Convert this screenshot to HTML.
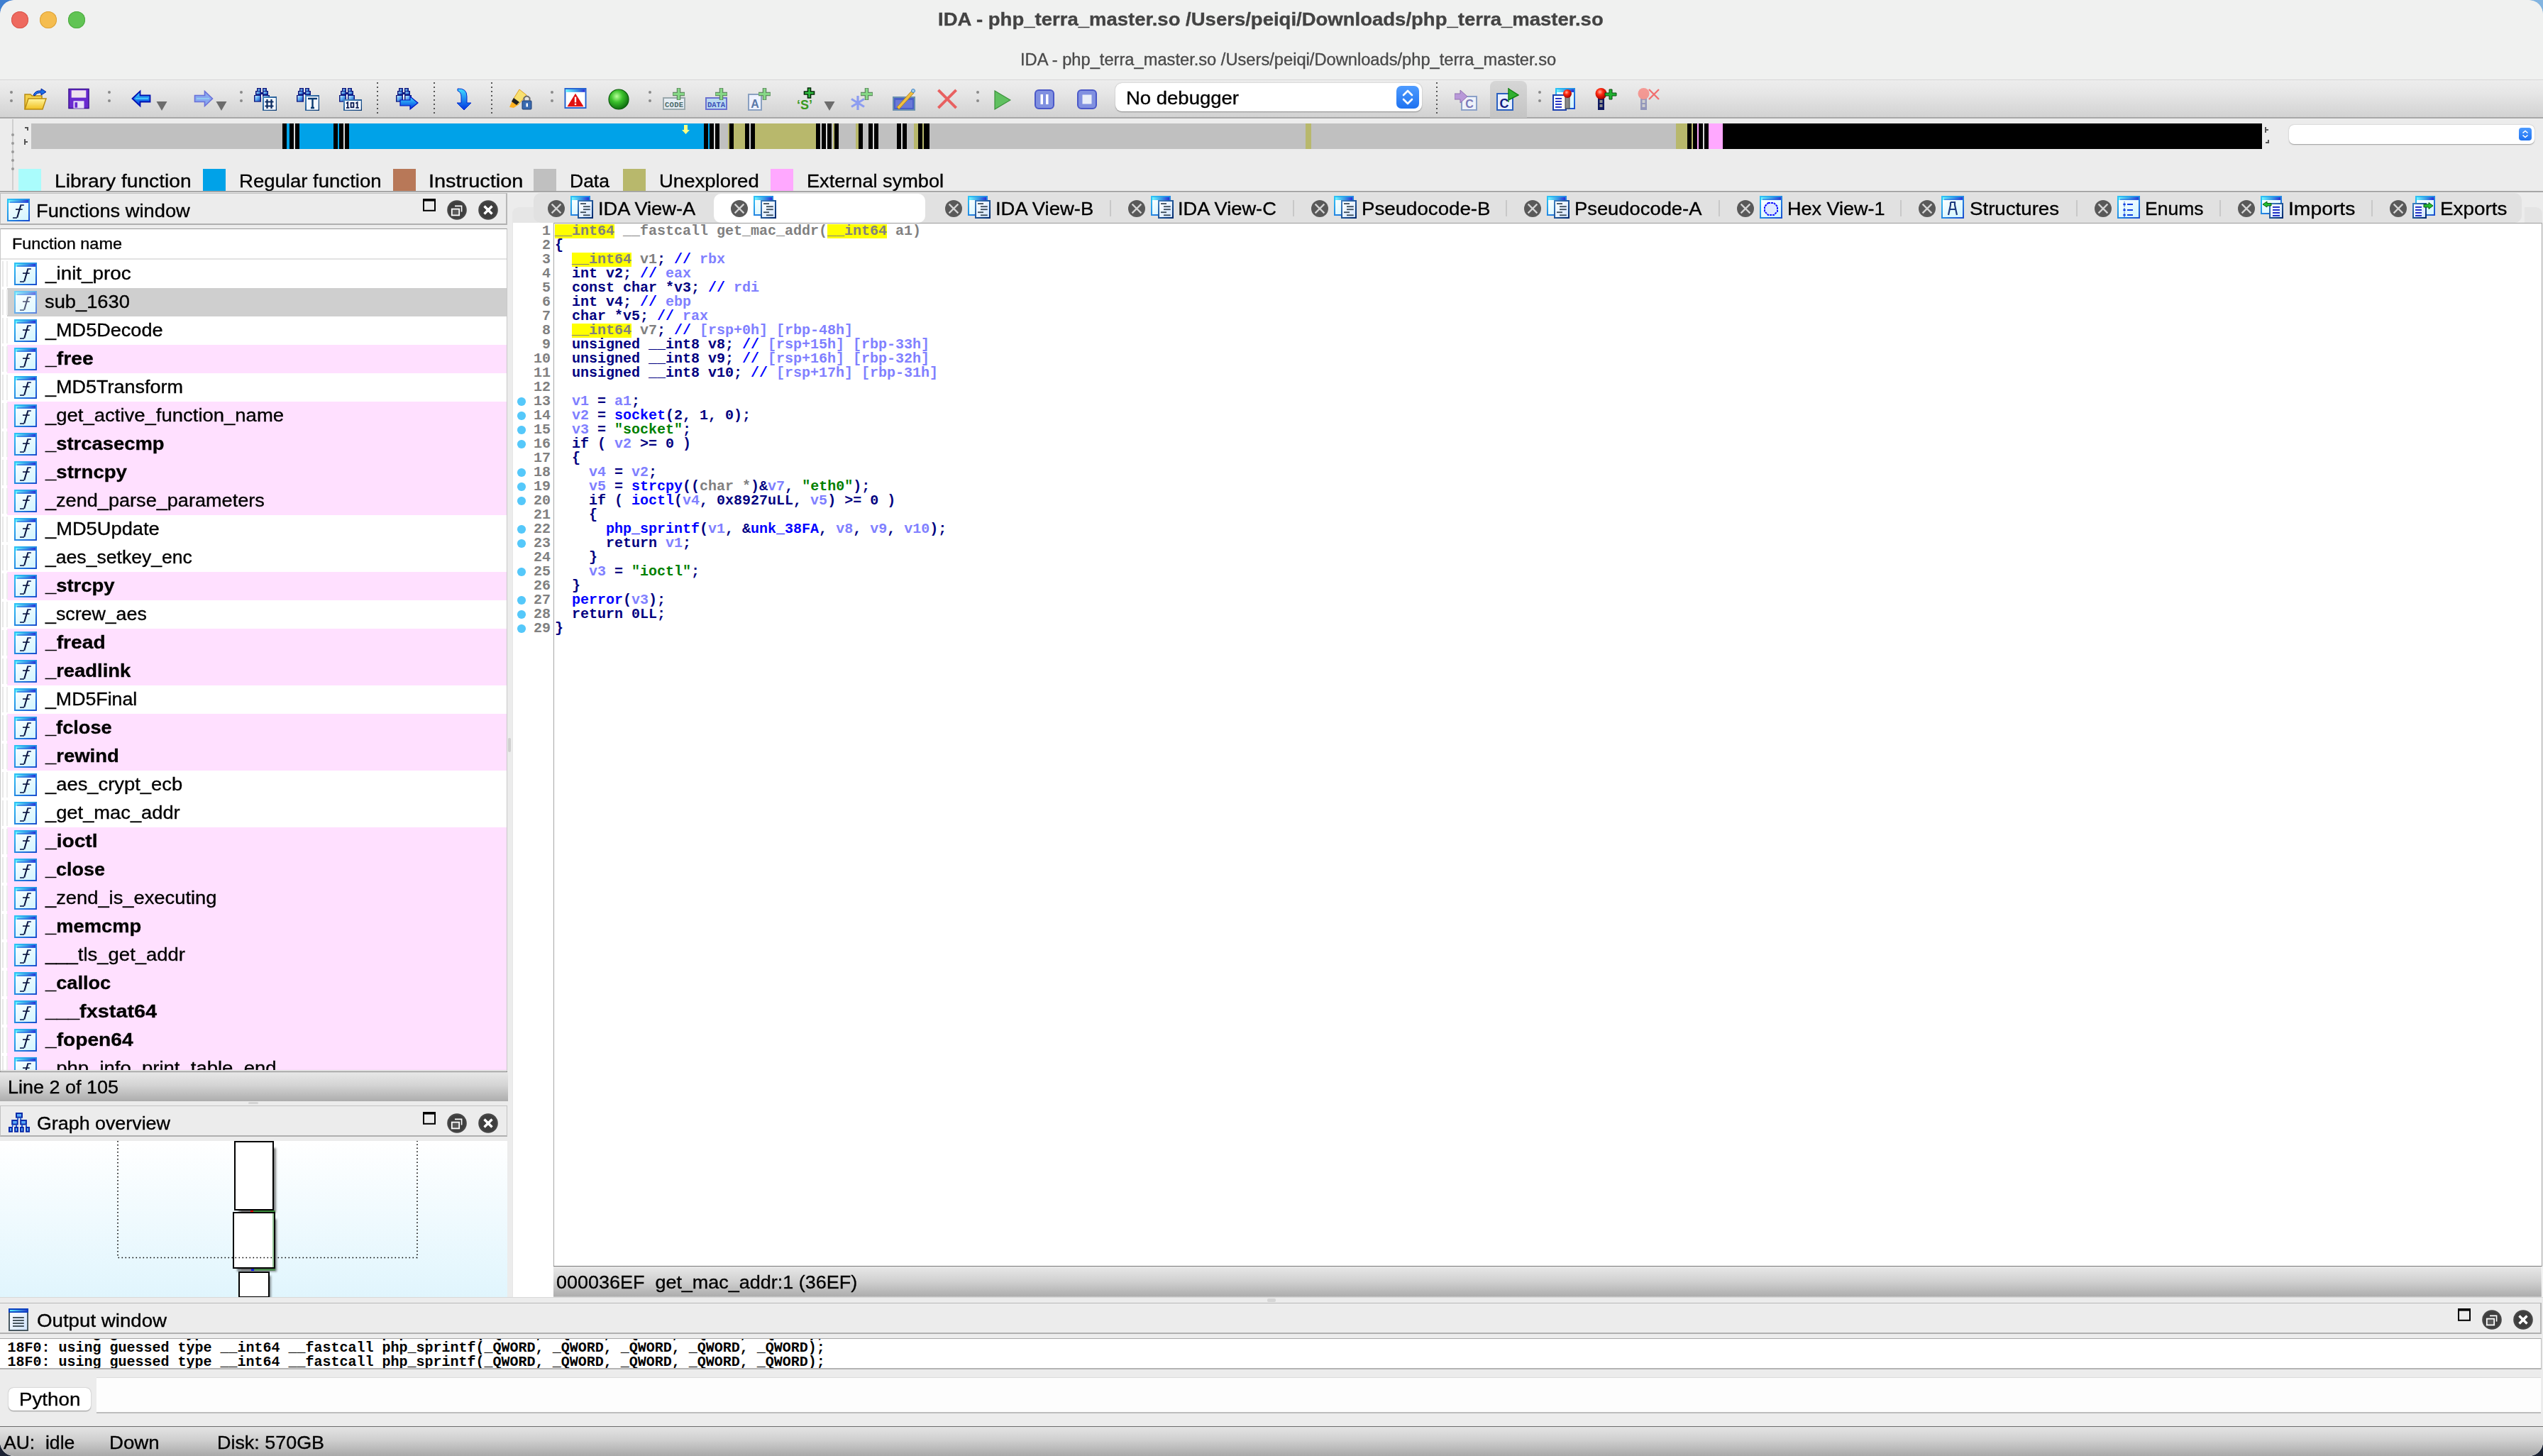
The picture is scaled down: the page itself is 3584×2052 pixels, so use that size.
<!DOCTYPE html>
<html><head><meta charset="utf-8"><style>
html,body{margin:0;padding:0;width:3584px;height:2052px;overflow:hidden;background:#2b3550}
#root div{position:absolute}
.t{position:absolute;line-height:40px;white-space:pre;-webkit-text-stroke:0.35px currentColor}
.c{position:absolute;font-family:'Liberation Mono';font-weight:bold;font-size:20px;line-height:20px;white-space:pre}
</style></head><body>

<svg width="0" height="0" style="position:absolute;left:0;top:0">
<defs>
 <linearGradient id="gWinBorder" x1="0" y1="0" x2="1" y2="1"><stop offset="0" stop-color="#2ec4f6"/><stop offset="1" stop-color="#1a4fcf"/></linearGradient>
 <linearGradient id="gTitle" x1="0" y1="0" x2="1" y2="0"><stop offset="0" stop-color="#6ef6ff"/><stop offset="0.55" stop-color="#3c9ae6"/><stop offset="1" stop-color="#2a2fd6"/></linearGradient>
 <linearGradient id="gWinBg" x1="0" y1="0" x2="0.6" y2="1"><stop offset="0" stop-color="#ffffff"/><stop offset="1" stop-color="#d6f6ff"/></linearGradient>
 <linearGradient id="gDocBorder" x1="0" y1="0" x2="1" y2="1"><stop offset="0" stop-color="#3f7fc0"/><stop offset="1" stop-color="#002a6e"/></linearGradient>
 <linearGradient id="gDocBg" x1="0" y1="0" x2="1" y2="1"><stop offset="0" stop-color="#ffffff"/><stop offset="1" stop-color="#d0e4ff"/></linearGradient>
 <radialGradient id="gGreenBall" cx="0.4" cy="0.35" r="0.65"><stop offset="0" stop-color="#b8ff9a"/><stop offset="0.45" stop-color="#3cc22c"/><stop offset="1" stop-color="#107010"/></radialGradient>
 <radialGradient id="gRedBall" cx="0.4" cy="0.35" r="0.65"><stop offset="0" stop-color="#ffb0a0"/><stop offset="0.4" stop-color="#ff2a10"/><stop offset="1" stop-color="#a00000"/></radialGradient>
 <linearGradient id="gBlueArrow" x1="0" y1="0" x2="0" y2="1"><stop offset="0" stop-color="#40e0ff"/><stop offset="1" stop-color="#0030e0"/></linearGradient>
 <linearGradient id="gFolder" x1="0" y1="0" x2="0" y2="1"><stop offset="0" stop-color="#fff6a0"/><stop offset="1" stop-color="#f0c020"/></linearGradient>

 <symbol id="win" viewBox="0 0 32 32">
  <rect x="1" y="1" width="30" height="30" fill="url(#gWinBg)" stroke="url(#gWinBorder)" stroke-width="2"/>
  <rect x="2" y="2" width="28" height="4" fill="url(#gTitle)"/>
  <rect x="4" y="4" width="26" height="2" fill="#2f62e0" opacity="0.55"/>
 </symbol>
 <symbol id="ficon" viewBox="0 0 32 32">
  <use href="#win" width="32" height="32"/>
  <rect x="18.3" y="8.2" width="5.5" height="1.7" fill="#1a2c6a"/>
  <path d="M19.2 9.6 L14.2 26.6" stroke="#0a1640" stroke-width="2"/>
  <rect x="12" y="14.3" width="9.7" height="1.6" fill="#0a1440"/>
  <rect x="8" y="26.2" width="6" height="1.7" fill="#1a2c5a"/>
 </symbol>
 <symbol id="doc" viewBox="0 0 32 32">
  <rect x="1" y="1" width="26" height="26" fill="url(#gWinBg)" stroke="url(#gWinBorder)" stroke-width="2"/>
  <rect x="2" y="2" width="24" height="4" fill="url(#gTitle)"/>
  <rect x="11" y="7" width="20" height="24" fill="url(#gDocBg)" stroke="url(#gDocBorder)" stroke-width="2"/>
  <g fill="#3a4a58">
   <rect x="14" y="10.2" width="8" height="1.8"/><rect x="18" y="14.3" width="9.7" height="1.8"/>
   <rect x="18" y="18.3" width="9.7" height="1.8"/><rect x="14" y="22.3" width="8" height="1.8"/>
   <rect x="18" y="26.4" width="9.7" height="1.8"/>
  </g>
 </symbol>
 <symbol id="hexi" viewBox="0 0 32 32">
  <use href="#win" width="32" height="32"/>
  <path d="M12 10 L20 10 L25 15 L25 22 L20 27 L12 27 L7 22 L7 15 Z" fill="#dce8ff" stroke="#1010ff" stroke-width="2" stroke-dasharray="3 1"/>
 </symbol>
 <symbol id="structi" viewBox="0 0 32 32">
  <use href="#win" width="32" height="32"/>
  <path d="M13 9 L19 9 L19 13 L22 27 M13 9 L13 13 L10 27 M12 19 L20 19" stroke="#1a3a80" stroke-width="2.2" fill="none"/>
 </symbol>
 <symbol id="enumi" viewBox="0 0 32 32">
  <use href="#win" width="32" height="32"/>
  <path d="M10 8 L10 30" stroke="#1060d0" stroke-width="1" stroke-dasharray="1.5 1.5"/>
  <g fill="#1040e0"><circle cx="10" cy="12" r="1.8"/><circle cx="10" cy="20" r="1.8"/><circle cx="10" cy="27" r="1.8"/>
  <rect x="14" y="11" width="8" height="2"/><rect x="14" y="19" width="8" height="2"/><rect x="14" y="26" width="8" height="2"/></g>
 </symbol>
 <symbol id="impi" viewBox="0 0 32 32">
  <rect x="1" y="1" width="28" height="24" fill="url(#gWinBg)" stroke="url(#gWinBorder)" stroke-width="2"/>
  <rect x="2" y="2" width="26" height="4" fill="url(#gTitle)"/>
  <rect x="13" y="11" width="18" height="20" fill="url(#gDocBg)" stroke="url(#gDocBorder)" stroke-width="2"/>
  <g fill="#1020c0"><rect x="17" y="15" width="10" height="1.8"/><rect x="17" y="19" width="10" height="1.8"/><rect x="17" y="23" width="10" height="1.8"/><rect x="17" y="27" width="10" height="1.8"/></g>
  <path d="M3 12 L9 8 L9 10.5 L15 10.5 L15 14 L9 14 L9 16 Z" fill="#22c030" stroke="#0a5a10" stroke-width="1"/>
 </symbol>
 <symbol id="expi" viewBox="0 0 32 32">
  <rect x="5" y="1" width="26" height="26" fill="url(#gWinBg)" stroke="url(#gWinBorder)" stroke-width="2"/>
  <rect x="6" y="2" width="24" height="4" fill="url(#gTitle)"/>
  <rect x="1" y="11" width="18" height="20" fill="url(#gDocBg)" stroke="url(#gDocBorder)" stroke-width="2"/>
  <g fill="#1020c0"><rect x="4" y="15" width="9" height="1.8"/><rect x="4" y="19" width="9" height="1.8"/><rect x="4" y="23" width="9" height="1.8"/><rect x="4" y="27" width="9" height="1.8"/></g>
  <path d="M29 14 L23 9.5 L23 12 L16 12 L16 16 L23 16 L23 18.5 Z" fill="#22c030" stroke="#0a5a10" stroke-width="1"/>
 </symbol>
 <symbol id="closec" viewBox="0 0 24 24">
  <circle cx="12" cy="12" r="12" fill="#595959"/>
  <path d="M5.6 5.6 L18.4 18.4 M18.4 5.6 L5.6 18.4" stroke="#d4d4d4" stroke-width="2.3"/>
 </symbol>
 <symbol id="pfloat" viewBox="0 0 18 18">
  <rect x="1" y="1.8" width="16" height="15" fill="none" stroke="#000" stroke-width="2"/>
  <rect x="0" y="0" width="18" height="3.6" fill="#000"/>
 </symbol>
 <symbol id="prestore" viewBox="0 0 28 28">
  <circle cx="14" cy="14" r="13.8" fill="#474747"/>
  <circle cx="14" cy="14" r="11.5" fill="#3e3e3e"/>
  <path d="M11 8.4 H20.6 V16.4" stroke="#fff" stroke-width="1.6" fill="none"/>
  <rect x="6.8" y="12.6" width="10.4" height="8.8" fill="#5a5a5a" stroke="#fff" stroke-width="1.8"/>
 </symbol>
 <symbol id="pclose" viewBox="0 0 28 28">
  <circle cx="14" cy="14" r="13.8" fill="#474747"/>
  <circle cx="14" cy="14" r="11.5" fill="#3e3e3e"/>
  <path d="M8.5 8.5 L19.5 19.5 M19.5 8.5 L8.5 19.5" stroke="#fff" stroke-width="3.4"/><rect x="11.5" y="11.5" width="5" height="5" fill="#fff"/>
 </symbol>
 <linearGradient id="gTitle2" x1="0" y1="0" x2="1" y2="0"><stop offset="0" stop-color="#60f4ff"/><stop offset="0.6" stop-color="#3a90e0"/><stop offset="1" stop-color="#3040d0"/></linearGradient>
 <symbol id="graphi" viewBox="0 0 32 32">
  <g fill="#5aaaf8" stroke="#0a2aa8" stroke-width="2">
   <rect x="12" y="3" width="8" height="5.7"/>
   <rect x="6.2" y="13" width="7.5" height="5.6"/><rect x="18.2" y="13" width="7.7" height="5.6"/>
   <rect x="2" y="23" width="4" height="5.8"/><rect x="10.1" y="23" width="3.9" height="5.8"/><rect x="18" y="23" width="3.8" height="5.8"/><rect x="26" y="23" width="4" height="5.8"/>
  </g>
  <g fill="#0a50d0"><rect x="13.2" y="9.7" width="1.8" height="2.3"/><rect x="17.3" y="9.7" width="1.8" height="2.3"/>
  <rect x="6" y="19.6" width="1.6" height="2.4"/><rect x="11" y="19.6" width="2" height="2.4"/><rect x="19" y="19.6" width="2" height="2.4"/><rect x="25" y="19.6" width="2" height="2.4"/></g>
 </symbol>
 <symbol id="outi" viewBox="0 0 28 32">
  <rect x="1" y="1" width="26" height="30" fill="url(#gDocBg)" stroke="#4a5a62" stroke-width="2"/>
  <rect x="0" y="0" width="28" height="6" fill="#0a40c0"/>
  <rect x="2" y="2" width="24" height="2.2" fill="url(#gTitle2)"/>
  <g fill="#3e4c54"><rect x="6" y="12" width="15.8" height="1.9"/><rect x="6" y="16" width="15.8" height="1.9"/><rect x="6" y="20" width="15.8" height="1.9"/><rect x="6" y="24" width="15.8" height="1.9"/></g>
 </symbol>

 <!-- toolbar icons -->
 <symbol id="t_open" viewBox="0 0 32 32">
  <path d="M1 9 H9 L11 11 H25 V29 H1 Z" fill="#f2d04a" stroke="#b88a10" stroke-width="1.5"/>
  <path d="M6 15 H31 L26 30 H1 Z" fill="url(#gFolder)" stroke="#b88a10" stroke-width="1.5"/>
  <path d="M13 10 Q16 3 24 4 L24 1 L31 5.5 L24 10 L24 7 Q18 6 15 11 Z" fill="#1a70e8" stroke="#0020a0" stroke-width="1"/>
 </symbol>
 <symbol id="t_save" viewBox="0 0 32 32">
  <rect x="1" y="1" width="30" height="29" fill="#6a2ad0" stroke="#3a1090" stroke-width="1.5"/>
  <rect x="5" y="3" width="22" height="11" fill="#f0e2ee"/>
  <rect x="8" y="19" width="16" height="11" fill="#e8e0f8"/>
  <rect x="10" y="21" width="4" height="8" fill="#6a2ad0"/>
 </symbol>
 <symbol id="t_back" viewBox="0 0 32 32">
  <path d="M2.5 19 L13.5 8.5 V14.5 H27.5 V23.5 H13.5 V29.5 Z" fill="url(#gBlueArrow)" stroke="#0010b0" stroke-width="1.8"/>
  <path d="M7 19 H25" stroke="#60f0ff" stroke-width="1.6" opacity="0.7"/>
 </symbol>
 <symbol id="t_fwd" viewBox="0 0 32 32">
  <path d="M29.5 19 L18.5 8.5 V14.5 H4.5 V23.5 H18.5 V29.5 Z" fill="#88a8f0" stroke="#6a70d8" stroke-width="1.6"/>
  <path d="M7 19 H25" stroke="#a0f0f0" stroke-width="1.6" opacity="0.6"/>
 </symbol>
 <symbol id="t_tri" viewBox="0 0 16 16">
  <path d="M0 1 H16 L8 15 Z" fill="#6c6c6c"/>
 </symbol>
 <linearGradient id="gBin" x1="0" y1="0" x2="1" y2="1"><stop offset="0" stop-color="#c8f0ff"/><stop offset="0.5" stop-color="#5aa8f0"/><stop offset="1" stop-color="#1a50c0"/></linearGradient>
 <linearGradient id="gBoxB" x1="0" y1="0" x2="1" y2="1"><stop offset="0" stop-color="#4a88c0"/><stop offset="1" stop-color="#00306a"/></linearGradient>
 <symbol id="t_binoc" viewBox="0 0 32 32">
  <g fill="#101a80">
   <rect x="4" y="0" width="6" height="5"/><rect x="12" y="0" width="6" height="5"/>
   <rect x="2" y="4" width="8" height="6"/><rect x="12" y="4" width="8" height="6"/>
   <rect x="0" y="10" width="10" height="9.7"/><rect x="12" y="10" width="10" height="9.7"/>
   <rect x="9" y="6" width="4" height="3"/>
  </g>
  <g fill="url(#gBin)">
   <rect x="5.5" y="1.5" width="3" height="3"/><rect x="13.5" y="1.5" width="3" height="3"/>
   <rect x="3.5" y="5.5" width="5" height="3"/><rect x="13.5" y="5.5" width="5" height="3"/>
   <rect x="1.5" y="11" width="7" height="7.5"/><rect x="13.5" y="11" width="7" height="7.5"/>
  </g>
  <rect x="10" y="10" width="2" height="3" fill="#fff"/>
 </symbol>
 <symbol id="t_binhash" viewBox="0 0 32 32">
  <use href="#t_binoc" width="32" height="32"/>
  <rect x="13" y="13" width="18.75" height="18.75" fill="#f4f8ff" stroke="url(#gBoxB)" stroke-width="2"/>
  <path d="M18.5 16 V29 M24.5 16 V29 M15.5 19.5 H27.5 M15.5 25.5 H27.5" stroke="#0a2a60" stroke-width="2.2"/>
 </symbol>
 <symbol id="t_bint" viewBox="0 0 32 32">
  <use href="#t_binoc" width="32" height="32"/>
  <rect x="13" y="11" width="18.75" height="20.75" fill="#f4f8ff" stroke="url(#gBoxB)" stroke-width="2"/>
  <path d="M16 15 H29 M22.5 15 V28 M20 28 H25" stroke="#0a3a70" stroke-width="2.4"/>
 </symbol>
 <symbol id="t_bin101" viewBox="0 0 32 32">
  <use href="#t_binoc" width="32" height="32"/>
  <rect x="7" y="17" width="24.75" height="14.75" fill="#f4f8ff" stroke="url(#gBoxB)" stroke-width="2"/>
  <path d="M10 21.8 L12.2 20.3 V27.8 M10 27.8 H14.4 M23.4 21.8 L25.6 20.3 V27.8 M23.4 27.8 H27.8" stroke="#0a1a50" stroke-width="1.8" fill="none"/>
  <rect x="16.6" y="21" width="3.8" height="6.2" fill="none" stroke="#0a1a50" stroke-width="1.8"/>
 </symbol>
 <symbol id="t_binarrow" viewBox="0 0 32 32">
  <use href="#t_binoc" width="32" height="32"/>
  <path d="M6 17 H20 V12 L31 21 L20 30 V25 H6 Z" fill="url(#gBlueArrow)" stroke="#0010c0" stroke-width="1.2"/>
 </symbol>
 <symbol id="t_down" viewBox="0 0 32 32">
  <path d="M4 1 Q17 0 17 12 V21 H23 L13 31 L3 21 H9 V12 Q9 6 4 4 Z" fill="url(#gBlueArrow)" stroke="#0028d0" stroke-width="1"/>
 </symbol>
 <symbol id="t_hilite" viewBox="0 0 32 32">
  <path d="M14 2 L24 10 L12 24 L4 18 Z" fill="#f8e070" stroke="#e0a020" stroke-width="1"/>
  <path d="M4 18 L12 24 L6 28 L0 27 Z" fill="#ffb020"/>
  <path d="M6 14 L14 20 L10 24 L3 19 Z" fill="#202020"/>
  <rect x="18" y="18" width="13" height="12" rx="1" fill="#3a6ab0" stroke="#1a3a70"/>
  <path d="M20.5 18 V14 Q24.5 9 28.5 14 V18" fill="none" stroke="#6a6a6a" stroke-width="2"/>
  <rect x="23.5" y="21.5" width="2.5" height="5" fill="#fff"/>
 </symbol>
 <symbol id="t_warn" viewBox="0 0 32 32">
  <rect x="1" y="1" width="30" height="28" fill="#fff" stroke="#2060d0" stroke-width="2"/>
  <rect x="2" y="2" width="28" height="4" fill="url(#gTitle)"/>
  <path d="M16 8 L28 27 H4 Z" fill="#e01010"/>
  <rect x="14.8" y="13" width="2.4" height="8" fill="#fff"/><rect x="14.8" y="22.5" width="2.4" height="2.4" fill="#fff"/>
 </symbol>
 <symbol id="t_ball" viewBox="0 0 32 32">
  <circle cx="16" cy="16" r="14" fill="url(#gGreenBall)" stroke="#0a5a0a" stroke-width="1.2"/>
 </symbol>
 <symbol id="t_plus" viewBox="0 0 16 16">
  <path d="M6 0 H10 V6 H16 V10 H10 V16 H6 V10 H0 V6 H6 Z" fill="#86d886" stroke="#5f8a60" stroke-width="1.2"/>
 </symbol>
 <symbol id="t_code" viewBox="0 0 32 32">
  <rect x="1" y="14" width="30" height="16" fill="#e6eef4" stroke="#9aa8ac" stroke-width="2"/>
  <text x="16" y="27" font-family="Liberation Mono" font-weight="bold" font-size="10.5" fill="#4a6868" text-anchor="middle" textLength="26">CODE</text>
  <use href="#t_plus" x="14" y="0" width="17" height="17"/>
 </symbol>
 <symbol id="t_data" viewBox="0 0 32 32">
  <rect x="1" y="14" width="29" height="16" fill="#b8d8f0" stroke="#6a70d0" stroke-width="2"/>
  <text x="15.5" y="27" font-family="Liberation Mono" font-weight="bold" font-size="10.5" fill="#3a50b8" text-anchor="middle" textLength="25">DATA</text>
  <use href="#t_plus" x="14" y="0" width="17" height="17"/>
 </symbol>
 <symbol id="t_aplus" viewBox="0 0 32 32">
  <rect x="1" y="9" width="18" height="22" fill="#eef2ff" stroke="#8aa0c0" stroke-width="2"/>
  <text x="10" y="28" font-family="Liberation Sans" font-weight="bold" font-size="16" fill="#5a78a8" text-anchor="middle">A</text>
  <use href="#t_plus" x="15" y="0" width="17" height="17"/>
 </symbol>
 <symbol id="t_splus" viewBox="0 0 32 32">
  <text x="12" y="31" font-family="Liberation Sans" font-weight="bold" font-size="18" fill="#3a9a20" text-anchor="middle">‘S’</text>
  <path d="M16.5 1 H20.5 V6 H25.5 V10 H20.5 V15 H16.5 V10 H11.5 V6 H16.5 Z" fill="#30c040" stroke="#062a08" stroke-width="1.6"/>
 </symbol>
 <symbol id="t_star" viewBox="0 0 32 32">
  <path d="M11 11 V31 M2 15.5 L20 26.5 M20 15.5 L2 26.5" stroke="#8c9cf0" stroke-width="3.2"/>
  <use href="#t_plus" x="15" y="0" width="17" height="17"/>
 </symbol>
 <symbol id="t_edit" viewBox="0 0 32 32">
  <rect x="1" y="13" width="30" height="18" fill="#4a60c8" stroke="#6a90b0" stroke-width="2"/>
  <rect x="4" y="17" width="24" height="11" fill="#6a78d8"/>
  <path d="M6 27 L27 4 L30 7 L9 30 Z" fill="#f0c040" stroke="#b08020" stroke-width="1"/>
  <circle cx="29" cy="4" r="2.5" fill="#a0d0f0" stroke="#4080c0"/>
 </symbol>
 <symbol id="t_redx" viewBox="0 0 32 32">
  <path d="M3 3 L29 29 M29 3 L3 29" stroke="#e86060" stroke-width="4"/>
 </symbol>
 <symbol id="t_play" viewBox="0 0 24 28">
  <path d="M1 1 L23 14 L1 27 Z" fill="#60c060" stroke="#3a903a" stroke-width="1.2"/>
 </symbol>
 <symbol id="t_pause" viewBox="0 0 28 28">
  <rect x="1" y="1" width="26" height="26" rx="5" fill="#8090e0" stroke="#4a58c8" stroke-width="2"/>
  <rect x="8.5" y="7" width="3.5" height="14" fill="#fff"/><rect x="16" y="7" width="3.5" height="14" fill="#fff"/>
 </symbol>
 <symbol id="t_stop" viewBox="0 0 28 28">
  <rect x="1" y="1" width="26" height="26" rx="5" fill="#8090e0" stroke="#4a58c8" stroke-width="2"/>
  <rect x="7.5" y="7.5" width="13" height="13" fill="#e8eef8"/>
 </symbol>
 <symbol id="t_carrow" viewBox="0 0 32 32">
  <rect x="10" y="12" width="21" height="19" fill="#eef2fa" stroke="#8aa0c8" stroke-width="2"/>
  <text x="21" y="28" font-family="Liberation Sans" font-weight="bold" font-size="16" fill="#7a78b8" text-anchor="middle">C</text>
  <path d="M0 8 H8 V3 L18 12 L8 21 V16 H0 Z" fill="#b898d8" stroke="#9070b0" stroke-width="1"/>
 </symbol>
 <symbol id="t_cplay" viewBox="0 0 32 32">
  <rect x="1" y="8" width="22" height="23" fill="#e8f0ff" stroke="#2a60c0" stroke-width="2"/>
  <text x="11" y="28" font-family="Liberation Sans" font-weight="bold" font-size="18" fill="#101a80" text-anchor="middle">C</text>
  <path d="M17 0 V20 M17 1 L31 10 L17 17 Z" fill="#30b030" stroke="#108010" stroke-width="1.4"/>
 </symbol>
 <symbol id="t_winpin" viewBox="0 0 32 32">
  <rect x="5" y="1" width="26" height="28" fill="url(#gWinBg)" stroke="url(#gWinBorder)" stroke-width="2"/>
  <rect x="6" y="2" width="24" height="4" fill="url(#gTitle)"/>
  <rect x="1" y="10" width="18" height="21" fill="#fff" stroke="#1a40b0" stroke-width="2"/>
  <g fill="#1020c0"><rect x="4" y="14" width="9" height="1.8"/><rect x="4" y="18" width="9" height="1.8"/><rect x="4" y="22" width="9" height="1.8"/><rect x="4" y="26" width="9" height="1.8"/></g>
  <rect x="18" y="12" width="6" height="17" fill="#8a8a8a" stroke="#404040"/>
  <circle cx="21" cy="8" r="6" fill="url(#gRedBall)"/>
 </symbol>
 <symbol id="t_pinplus" viewBox="0 0 32 32">
  <rect x="4" y="14" width="9" height="17" fill="#101a60"/>
  <rect x="6.5" y="17" width="4" height="4" fill="#909090"/><rect x="6.5" y="23" width="4" height="4" fill="#909090"/>
  <circle cx="8.5" cy="8" r="8" fill="url(#gRedBall)"/>
  <path d="M20 2 H24 V7 H30 V11 H24 V16 H20 V11 H14 V7 H20 Z" fill="#20b030" stroke="#0a4a10" stroke-width="1"/>
 </symbol>
 <symbol id="t_pinx" viewBox="0 0 32 32">
  <g opacity="0.55">
  <rect x="4" y="14" width="9" height="17" fill="#5a60a0"/>
  <rect x="6.5" y="17" width="4" height="4" fill="#c0c0c0"/><rect x="6.5" y="23" width="4" height="4" fill="#c0c0c0"/>
  <circle cx="8.5" cy="8" r="8" fill="#ff5a50"/>
  </g>
  <path d="M16 2 L30 16 M30 2 L16 16" stroke="#f07070" stroke-width="2.4"/>
 </symbol>
</defs>
</svg>

<div style="position:absolute;left:0;top:0;width:60px;height:60px;background:#3f7fd0"></div>
<div style="position:absolute;left:3524px;top:0;width:60px;height:60px;background:#82b4e0"></div>
<div style="position:absolute;left:0;top:1992px;width:60px;height:60px;background:#1b2233"></div>
<div style="position:absolute;left:3524px;top:1992px;width:60px;height:60px;background:#1b2233"></div>
<div id="root" style="position:absolute;left:0;top:0;width:3584px;height:2052px;overflow:hidden;border-radius:20px">
<div style="left:0px;top:0px;width:3584px;height:2052px;background:#ececec;border-radius:20px"></div>
<div style="left:0px;top:0px;width:3584px;height:112px;background:#f0f1f0;border-radius:20px 20px 0 0"></div>
<div style="left:16px;top:16px;width:24px;height:24px;background:#ee6a5f;border-radius:50%;box-shadow:inset 0 0 0 1px #d8564c"></div>
<div style="left:56px;top:16px;width:24px;height:24px;background:#f5bd4f;border-radius:50%;box-shadow:inset 0 0 0 1px #dca23a"></div>
<div style="left:96px;top:16px;width:24px;height:24px;background:#61c454;border-radius:50%;box-shadow:inset 0 0 0 1px #4eaa41"></div>
<div class="t" style="left:1321.58px;top:7.00px;font-family:'Liberation Sans';font-size:26px;font-weight:bold;color:#434343;transform:scaleX(1.0581);transform-origin:0 0;">IDA - php_terra_master.so /Users/peiqi/Downloads/php_terra_master.so</div>
<div class="t" style="left:1437.64px;top:64.00px;font-family:'Liberation Sans';font-size:23px;font-weight:normal;color:#4a4a4a;transform:scaleX(1.0291);transform-origin:0 0;">IDA - php_terra_master.so /Users/peiqi/Downloads/php_terra_master.so</div>
<div style="left:0px;top:112px;width:3584px;height:1px;background:#d6d6d6"></div>
<div style="left:0px;top:113px;width:3584px;height:52px;background:linear-gradient(#ededed,#e6e6e6 35%,#d2d2d2)"></div>
<div style="left:0px;top:165px;width:3584px;height:2px;background:#a8a8a8"></div>
<div style="left:14px;top:128px;width:4px;height:4px;background:#8a8a8a;border-radius:50%"></div>
<div style="left:14px;top:140px;width:4px;height:4px;background:#8a8a8a;border-radius:50%"></div>
<svg style="position:absolute;left:34px;top:124px" width="32" height="32"><use href="#t_open" width="32" height="32"/></svg>
<svg style="position:absolute;left:96px;top:124px" width="30" height="31"><use href="#t_save" width="30" height="31"/></svg>
<div style="left:152px;top:128px;width:4px;height:4px;background:#8a8a8a;border-radius:50%"></div>
<div style="left:152px;top:140px;width:4px;height:4px;background:#8a8a8a;border-radius:50%"></div>
<svg style="position:absolute;left:184px;top:120px" width="32" height="32"><use href="#t_back" width="32" height="32"/></svg>
<svg style="position:absolute;left:220px;top:142px" width="16" height="15"><use href="#t_tri" width="16" height="15"/></svg>
<svg style="position:absolute;left:270px;top:120px" width="32" height="32"><use href="#t_fwd" width="32" height="32"/></svg>
<svg style="position:absolute;left:304px;top:142px" width="16" height="15"><use href="#t_tri" width="16" height="15"/></svg>
<div style="left:338px;top:128px;width:4px;height:4px;background:#8a8a8a;border-radius:50%"></div>
<div style="left:338px;top:140px;width:4px;height:4px;background:#8a8a8a;border-radius:50%"></div>
<svg style="position:absolute;left:358px;top:124px" width="32" height="32"><use href="#t_binhash" width="32" height="32"/></svg>
<svg style="position:absolute;left:418px;top:124px" width="32" height="32"><use href="#t_bint" width="32" height="32"/></svg>
<svg style="position:absolute;left:478px;top:124px" width="32" height="32"><use href="#t_bin101" width="32" height="32"/></svg>
<div style="left:531px;top:116px;width:2px;height:45px;background:repeating-linear-gradient(#555 0 2px,transparent 2px 6px)"></div>
<svg style="position:absolute;left:558px;top:124px" width="32" height="32"><use href="#t_binarrow" width="32" height="32"/></svg>
<div style="left:611px;top:116px;width:2px;height:45px;background:repeating-linear-gradient(#555 0 2px,transparent 2px 6px)"></div>
<svg style="position:absolute;left:641px;top:124px" width="32" height="32"><use href="#t_down" width="32" height="32"/></svg>
<div style="left:692px;top:116px;width:2px;height:45px;background:repeating-linear-gradient(#555 0 2px,transparent 2px 6px)"></div>
<svg style="position:absolute;left:718px;top:124px" width="32" height="32"><use href="#t_hilite" width="32" height="32"/></svg>
<div style="left:776px;top:128px;width:4px;height:4px;background:#8a8a8a;border-radius:50%"></div>
<div style="left:776px;top:140px;width:4px;height:4px;background:#8a8a8a;border-radius:50%"></div>
<svg style="position:absolute;left:795px;top:124px" width="32" height="31"><use href="#t_warn" width="32" height="31"/></svg>
<svg style="position:absolute;left:856px;top:124px" width="32" height="32"><use href="#t_ball" width="32" height="32"/></svg>
<div style="left:914px;top:128px;width:4px;height:4px;background:#8a8a8a;border-radius:50%"></div>
<div style="left:914px;top:140px;width:4px;height:4px;background:#8a8a8a;border-radius:50%"></div>
<svg style="position:absolute;left:934px;top:124px" width="32" height="32"><use href="#t_code" width="32" height="32"/></svg>
<svg style="position:absolute;left:994px;top:124px" width="32" height="32"><use href="#t_data" width="32" height="32"/></svg>
<svg style="position:absolute;left:1054px;top:124px" width="32" height="32"><use href="#t_aplus" width="32" height="32"/></svg>
<svg style="position:absolute;left:1122px;top:122px" width="32" height="34"><use href="#t_splus" width="32" height="34"/></svg>
<svg style="position:absolute;left:1161px;top:142px" width="16" height="15"><use href="#t_tri" width="16" height="15"/></svg>
<svg style="position:absolute;left:1198px;top:124px" width="32" height="32"><use href="#t_star" width="32" height="32"/></svg>
<svg style="position:absolute;left:1258px;top:124px" width="32" height="32"><use href="#t_edit" width="32" height="32"/></svg>
<svg style="position:absolute;left:1319px;top:124px" width="32" height="31"><use href="#t_redx" width="32" height="31"/></svg>
<div style="left:1376px;top:128px;width:4px;height:4px;background:#8a8a8a;border-radius:50%"></div>
<div style="left:1376px;top:140px;width:4px;height:4px;background:#8a8a8a;border-radius:50%"></div>
<svg style="position:absolute;left:1401px;top:127px" width="24" height="28"><use href="#t_play" width="24" height="28"/></svg>
<svg style="position:absolute;left:1458px;top:126px" width="28" height="28"><use href="#t_pause" width="28" height="28"/></svg>
<svg style="position:absolute;left:1518px;top:126px" width="28" height="28"><use href="#t_stop" width="28" height="28"/></svg>
<div style="left:1572px;top:117px;width:432px;height:40px;background:#fff;border-radius:9px;box-shadow:0 0.5px 1.5px rgba(0,0,0,.35)"></div>
<div style="left:1968px;top:121px;width:32px;height:32px;background:linear-gradient(#4d9bff,#1f72f0);border-radius:7px"></div>
<svg style="position:absolute;left:1968px;top:121px" width="32" height="32"><path d="M10 13 L16 7 L22 13 M10 19 L16 25 L22 19" stroke="#fff" stroke-width="2.6" fill="none" stroke-linecap="round" stroke-linejoin="round"/></svg>
<div class="t" style="left:1586.89px;top:118.00px;font-family:'Liberation Sans';font-size:26px;font-weight:normal;color:#000;transform:scaleX(1.0574);transform-origin:0 0;">No debugger</div>
<div style="left:2024px;top:116px;width:2px;height:45px;background:repeating-linear-gradient(#555 0 2px,transparent 2px 6px)"></div>
<svg style="position:absolute;left:2050px;top:124px" width="32" height="32"><use href="#t_carrow" width="32" height="32"/></svg>
<div style="left:2100px;top:114px;width:52px;height:52px;background:linear-gradient(#d6d6d6,#c4c4c4);border-radius:8px 8px 0 0"></div>
<svg style="position:absolute;left:2109px;top:124px" width="32" height="32"><use href="#t_cplay" width="32" height="32"/></svg>
<div style="left:2168px;top:128px;width:4px;height:4px;background:#8a8a8a;border-radius:50%"></div>
<div style="left:2168px;top:140px;width:4px;height:4px;background:#8a8a8a;border-radius:50%"></div>
<svg style="position:absolute;left:2188px;top:124px" width="32" height="32"><use href="#t_winpin" width="32" height="32"/></svg>
<svg style="position:absolute;left:2248px;top:124px" width="32" height="32"><use href="#t_pinplus" width="32" height="32"/></svg>
<svg style="position:absolute;left:2308px;top:124px" width="32" height="32"><use href="#t_pinx" width="32" height="32"/></svg>
<div style="left:0px;top:167px;width:3584px;height:102px;background:#ececec"></div>
<div style="left:17px;top:168px;width:2px;height:100px;background:#cfcfcf"></div>
<div style="left:16px;top:188px;width:4px;height:4px;background:#9a9a9a;border-radius:50%"></div>
<div style="left:16px;top:200px;width:4px;height:4px;background:#9a9a9a;border-radius:50%"></div>
<div style="left:16px;top:212px;width:4px;height:4px;background:#9a9a9a;border-radius:50%"></div>
<div style="left:16px;top:224px;width:4px;height:4px;background:#9a9a9a;border-radius:50%"></div>
<div style="left:16px;top:236px;width:4px;height:4px;background:#9a9a9a;border-radius:50%"></div>
<svg style="position:absolute;left:32px;top:176px" width="10" height="30"><path d="M3 4 H7 V8 M3 20 V28 M3 24 H7" stroke="#555" stroke-width="2" fill="none"/></svg>
<svg style="position:absolute;left:3190px;top:176px" width="10" height="30"><path d="M3 3 V11 M3 7 H7 M7 21 V25 H3" stroke="#555" stroke-width="2" fill="none"/></svg>
<svg style="position:absolute;left:44px;top:174px" width="3144" height="36" shape-rendering="crispEdges"><rect x="0.00" y="0" width="353.90" height="36" fill="#c0c0c0"/><rect x="353.90" y="0" width="6.10" height="36" fill="#000000"/><rect x="360.00" y="0" width="3.80" height="36" fill="#00a2e8"/><rect x="363.80" y="0" width="6.20" height="36" fill="#000000"/><rect x="370.00" y="0" width="2.00" height="36" fill="#d8d8d8"/><rect x="372.00" y="0" width="6.00" height="36" fill="#000000"/><rect x="378.00" y="0" width="48.00" height="36" fill="#00a2e8"/><rect x="426.00" y="0" width="6.00" height="36" fill="#000000"/><rect x="432.00" y="0" width="2.00" height="36" fill="#00a2e8"/><rect x="434.00" y="0" width="6.00" height="36" fill="#000000"/><rect x="440.00" y="0" width="2.00" height="36" fill="#d8d8d8"/><rect x="442.00" y="0" width="6.00" height="36" fill="#000000"/><rect x="448.00" y="0" width="499.90" height="36" fill="#00a2e8"/><rect x="947.90" y="0" width="6.10" height="36" fill="#000000"/><rect x="954.00" y="0" width="2.00" height="36" fill="#00a2e8"/><rect x="956.00" y="0" width="6.00" height="36" fill="#000000"/><rect x="962.00" y="0" width="2.00" height="36" fill="#d8d8d8"/><rect x="964.00" y="0" width="6.00" height="36" fill="#000000"/><rect x="970.00" y="0" width="12.00" height="36" fill="#c0c0c0"/><rect x="982.00" y="0" width="2.00" height="36" fill="#b8b86c"/><rect x="984.00" y="0" width="6.00" height="36" fill="#000000"/><rect x="990.00" y="0" width="16.00" height="36" fill="#b8b86c"/><rect x="1006.00" y="0" width="6.00" height="36" fill="#000000"/><rect x="1012.00" y="0" width="2.00" height="36" fill="#d8d8d8"/><rect x="1014.00" y="0" width="6.00" height="36" fill="#000000"/><rect x="1020.00" y="0" width="86.00" height="36" fill="#b8b86c"/><rect x="1106.00" y="0" width="6.00" height="36" fill="#000000"/><rect x="1112.00" y="0" width="2.00" height="36" fill="#d8d8d8"/><rect x="1114.00" y="0" width="6.00" height="36" fill="#000000"/><rect x="1120.00" y="0" width="2.00" height="36" fill="#d8d8d8"/><rect x="1122.00" y="0" width="6.00" height="36" fill="#000000"/><rect x="1128.00" y="0" width="2.00" height="36" fill="#c0c0c0"/><rect x="1130.00" y="0" width="2.00" height="36" fill="#b8b86c"/><rect x="1132.00" y="0" width="6.00" height="36" fill="#000000"/><rect x="1138.00" y="0" width="24.00" height="36" fill="#c0c0c0"/><rect x="1162.00" y="0" width="4.00" height="36" fill="#b8b86c"/><rect x="1166.00" y="0" width="6.00" height="36" fill="#000000"/><rect x="1172.00" y="0" width="8.00" height="36" fill="#c0c0c0"/><rect x="1180.00" y="0" width="6.00" height="36" fill="#000000"/><rect x="1186.00" y="0" width="2.00" height="36" fill="#d8d8d8"/><rect x="1188.00" y="0" width="6.00" height="36" fill="#000000"/><rect x="1194.00" y="0" width="26.00" height="36" fill="#c0c0c0"/><rect x="1220.00" y="0" width="6.00" height="36" fill="#000000"/><rect x="1226.00" y="0" width="2.00" height="36" fill="#d8d8d8"/><rect x="1228.00" y="0" width="6.00" height="36" fill="#000000"/><rect x="1234.00" y="0" width="10.00" height="36" fill="#c0c0c0"/><rect x="1244.00" y="0" width="6.00" height="36" fill="#b8b86c"/><rect x="1250.00" y="0" width="6.00" height="36" fill="#000000"/><rect x="1256.00" y="0" width="2.00" height="36" fill="#b8b86c"/><rect x="1258.00" y="0" width="8.00" height="36" fill="#000000"/><rect x="1266.00" y="0" width="530.00" height="36" fill="#c0c0c0"/><rect x="1796.00" y="0" width="8.00" height="36" fill="#b8b86c"/><rect x="1804.00" y="0" width="514.00" height="36" fill="#c0c0c0"/><rect x="2318.00" y="0" width="16.00" height="36" fill="#b8b86c"/><rect x="2334.00" y="0" width="6.00" height="36" fill="#000000"/><rect x="2340.00" y="0" width="2.00" height="36" fill="#b8b86c"/><rect x="2342.00" y="0" width="6.00" height="36" fill="#000000"/><rect x="2348.00" y="0" width="2.00" height="36" fill="#ffa8ff"/><rect x="2350.00" y="0" width="6.00" height="36" fill="#000000"/><rect x="2356.00" y="0" width="2.00" height="36" fill="#d8d8d8"/><rect x="2358.00" y="0" width="6.00" height="36" fill="#000000"/><rect x="2364.00" y="0" width="20.00" height="36" fill="#ffa8ff"/><rect x="2384.00" y="0" width="760.00" height="36" fill="#000000"/></svg>
<svg style="position:absolute;left:960px;top:175px" width="16" height="16"><path d="M4 1 H9 V8 H12 L6.5 14 L1 8 H4 Z" fill="#ffff80"/></svg>
<div style="left:3225.5px;top:175.5px;width:346.5px;height:27px;background:#fff;border-radius:7px;box-shadow:0 0.5px 1.5px rgba(0,0,0,.35)"></div>
<div style="left:3550px;top:180px;width:17.5px;height:18px;background:linear-gradient(#4d9bff,#1f72f0);border-radius:4px"></div>
<svg style="position:absolute;left:3550px;top:180px" width="18" height="18"><path d="M5.5 7.5 L9 4.5 L12.5 7.5 M5.5 10.5 L9 13.5 L12.5 10.5" stroke="#fff" stroke-width="1.6" fill="none"/></svg>
<div style="left:26px;top:238px;width:32px;height:31px;background:#aafcfc"></div>
<div class="t" style="left:76.83px;top:235.25px;font-family:'Liberation Sans';font-size:26px;font-weight:normal;color:#000;transform:scaleX(1.0833);transform-origin:0 0;">Library function</div>
<div style="left:286px;top:238px;width:32px;height:31px;background:#00a2e8"></div>
<div class="t" style="left:336.88px;top:235.25px;font-family:'Liberation Sans';font-size:26px;font-weight:normal;color:#000;transform:scaleX(1.0591);transform-origin:0 0;">Regular function</div>
<div style="left:554px;top:238px;width:32px;height:31px;background:#b87858"></div>
<div class="t" style="left:603.78px;top:235.25px;font-family:'Liberation Sans';font-size:26px;font-weight:normal;color:#000;transform:scaleX(1.1121);transform-origin:0 0;">Instruction</div>
<div style="left:752px;top:238px;width:32px;height:31px;background:#c0c0c0"></div>
<div class="t" style="left:802.96px;top:235.25px;font-family:'Liberation Sans';font-size:26px;font-weight:normal;color:#000;transform:scaleX(1.0189);transform-origin:0 0;">Data</div>
<div style="left:878px;top:238px;width:32px;height:31px;background:#b8b86c"></div>
<div class="t" style="left:928.88px;top:235.25px;font-family:'Liberation Sans';font-size:26px;font-weight:normal;color:#000;transform:scaleX(1.0581);transform-origin:0 0;">Unexplored</div>
<div style="left:1086px;top:238px;width:32px;height:31px;background:#ffa8ff"></div>
<div class="t" style="left:1136.91px;top:235.25px;font-family:'Liberation Sans';font-size:26px;font-weight:normal;color:#000;transform:scaleX(1.0440);transform-origin:0 0;">External symbol</div>
<div style="left:0px;top:269px;width:3584px;height:2px;background:#a6a6a6"></div>
<div style="left:0px;top:271px;width:722px;height:1566px;background:#ececec"></div>
<div style="left:0px;top:272px;width:715px;height:45px;background:#ececec;border:1px solid #bdbdbd;border-bottom:2px solid #b0b0b0;border-right:2px solid #b8b8b8;box-sizing:border-box"></div>
<svg style="position:absolute;left:10px;top:280px" width="32" height="32"><use href="#ficon" width="32" height="32"/></svg>
<div class="t" style="left:50.90px;top:276.75px;font-family:'Liberation Sans';font-size:26px;font-weight:normal;color:#000;transform:scaleX(1.0488);transform-origin:0 0;">Functions window</div>
<svg style="position:absolute;left:596px;top:280px" width="18" height="18"><use href="#pfloat" width="18" height="18"/></svg>
<svg style="position:absolute;left:630px;top:282px" width="28" height="28"><use href="#prestore" width="28" height="28"/></svg>
<svg style="position:absolute;left:674px;top:282px" width="28" height="28"><use href="#pclose" width="28" height="28"/></svg>
<div style="left:0px;top:322px;width:715px;height:1188px;background:#fff;border-top:1px solid #9a9a9a;border-left:1px solid #c8c8c8;border-right:1px solid #c8c8c8;box-sizing:border-box"></div>
<div class="t" style="left:16.62px;top:324.00px;font-family:'Liberation Sans';font-size:22px;font-weight:normal;color:#000;transform:scaleX(1.0647);transform-origin:0 0;">Function name</div>
<div style="left:1px;top:364px;width:713px;height:2px;background:#e2e2e2"></div>
<div style="left:0;top:366px;width:715px;height:1143px;overflow:hidden">
<div style="left:10px;top:0px;width:704px;height:40px;background:#ffffff"></div>
<div style="left:3px;top:2px;width:2px;height:36px;background:#e8e8e8"></div>
<div style="left:9px;top:2px;width:2px;height:36px;background:#ececec"></div>
<svg style="position:absolute;left:20px;top:4px" width="32" height="32"><use href="#ficon" width="32" height="32"/></svg>
<div class="t" style="left:64.00px;top:-1.25px;font-family:'Liberation Sans';font-size:26px;font-weight:normal;color:#000;transform:scaleX(1.0714);transform-origin:0 0;">_init_proc</div>
<div style="left:10px;top:40px;width:704px;height:40px;background:#cfcfcf"></div>
<div style="left:3px;top:42px;width:2px;height:36px;background:#e8e8e8"></div>
<div style="left:9px;top:42px;width:2px;height:36px;background:#ececec"></div>
<svg style="position:absolute;left:20px;top:44px" width="32" height="32"><use href="#ficon" width="32" height="32"/></svg>
<div style="left:20px;top:44px;width:32px;height:32px;background:rgba(255,255,255,0.3)"></div>
<div class="t" style="left:62.95px;top:38.75px;font-family:'Liberation Sans';font-size:26px;font-weight:normal;color:#000;transform:scaleX(1.0491);transform-origin:0 0;">sub_1630</div>
<div style="left:10px;top:80px;width:704px;height:40px;background:#ffffff"></div>
<div style="left:3px;top:82px;width:2px;height:36px;background:#e8e8e8"></div>
<div style="left:9px;top:82px;width:2px;height:36px;background:#ececec"></div>
<svg style="position:absolute;left:20px;top:84px" width="32" height="32"><use href="#ficon" width="32" height="32"/></svg>
<div class="t" style="left:64.00px;top:78.75px;font-family:'Liberation Sans';font-size:26px;font-weight:normal;color:#000;transform:scaleX(1.0411);transform-origin:0 0;">_MD5Decode</div>
<div style="left:10px;top:120px;width:704px;height:40px;background:#ffe0ff"></div>
<div style="left:3px;top:122px;width:2px;height:36px;background:#e8e8e8"></div>
<div style="left:9px;top:122px;width:2px;height:36px;background:#ececec"></div>
<svg style="position:absolute;left:20px;top:124px" width="32" height="32"><use href="#ficon" width="32" height="32"/></svg>
<div class="t" style="left:64.00px;top:118.75px;font-family:'Liberation Sans';font-size:26px;font-weight:bold;color:#000;transform:scaleX(1.0887);transform-origin:0 0;">_free</div>
<div style="left:10px;top:160px;width:704px;height:40px;background:#ffffff"></div>
<div style="left:3px;top:162px;width:2px;height:36px;background:#e8e8e8"></div>
<div style="left:9px;top:162px;width:2px;height:36px;background:#ececec"></div>
<svg style="position:absolute;left:20px;top:164px" width="32" height="32"><use href="#ficon" width="32" height="32"/></svg>
<div class="t" style="left:64.00px;top:158.75px;font-family:'Liberation Sans';font-size:26px;font-weight:normal;color:#000;transform:scaleX(1.0378);transform-origin:0 0;">_MD5Transform</div>
<div style="left:10px;top:200px;width:704px;height:40px;background:#ffe0ff"></div>
<div style="left:3px;top:202px;width:2px;height:36px;background:#e8e8e8"></div>
<div style="left:9px;top:202px;width:2px;height:36px;background:#ececec"></div>
<svg style="position:absolute;left:20px;top:204px" width="32" height="32"><use href="#ficon" width="32" height="32"/></svg>
<div class="t" style="left:64.00px;top:198.75px;font-family:'Liberation Sans';font-size:26px;font-weight:normal;color:#000;transform:scaleX(1.0568);transform-origin:0 0;">_get_active_function_name</div>
<div style="left:10px;top:240px;width:704px;height:40px;background:#ffe0ff"></div>
<div style="left:3px;top:242px;width:2px;height:36px;background:#e8e8e8"></div>
<div style="left:9px;top:242px;width:2px;height:36px;background:#ececec"></div>
<svg style="position:absolute;left:20px;top:244px" width="32" height="32"><use href="#ficon" width="32" height="32"/></svg>
<div class="t" style="left:64.00px;top:238.75px;font-family:'Liberation Sans';font-size:26px;font-weight:bold;color:#000;transform:scaleX(1.0538);transform-origin:0 0;">_strcasecmp</div>
<div style="left:10px;top:280px;width:704px;height:40px;background:#ffe0ff"></div>
<div style="left:3px;top:282px;width:2px;height:36px;background:#e8e8e8"></div>
<div style="left:9px;top:282px;width:2px;height:36px;background:#ececec"></div>
<svg style="position:absolute;left:20px;top:284px" width="32" height="32"><use href="#ficon" width="32" height="32"/></svg>
<div class="t" style="left:64.00px;top:278.75px;font-family:'Liberation Sans';font-size:26px;font-weight:bold;color:#000;transform:scaleX(1.0602);transform-origin:0 0;">_strncpy</div>
<div style="left:10px;top:320px;width:704px;height:40px;background:#ffe0ff"></div>
<div style="left:3px;top:322px;width:2px;height:36px;background:#e8e8e8"></div>
<div style="left:9px;top:322px;width:2px;height:36px;background:#ececec"></div>
<svg style="position:absolute;left:20px;top:324px" width="32" height="32"><use href="#ficon" width="32" height="32"/></svg>
<div class="t" style="left:64.00px;top:318.75px;font-family:'Liberation Sans';font-size:26px;font-weight:normal;color:#000;transform:scaleX(1.0424);transform-origin:0 0;">_zend_parse_parameters</div>
<div style="left:10px;top:360px;width:704px;height:40px;background:#ffffff"></div>
<div style="left:3px;top:362px;width:2px;height:36px;background:#e8e8e8"></div>
<div style="left:9px;top:362px;width:2px;height:36px;background:#ececec"></div>
<svg style="position:absolute;left:20px;top:364px" width="32" height="32"><use href="#ficon" width="32" height="32"/></svg>
<div class="t" style="left:64.00px;top:358.75px;font-family:'Liberation Sans';font-size:26px;font-weight:normal;color:#000;transform:scaleX(1.0493);transform-origin:0 0;">_MD5Update</div>
<div style="left:10px;top:400px;width:704px;height:40px;background:#ffffff"></div>
<div style="left:3px;top:402px;width:2px;height:36px;background:#e8e8e8"></div>
<div style="left:9px;top:402px;width:2px;height:36px;background:#ececec"></div>
<svg style="position:absolute;left:20px;top:404px" width="32" height="32"><use href="#ficon" width="32" height="32"/></svg>
<div class="t" style="left:64.00px;top:398.75px;font-family:'Liberation Sans';font-size:26px;font-weight:normal;color:#000;transform:scaleX(1.0223);transform-origin:0 0;">_aes_setkey_enc</div>
<div style="left:10px;top:440px;width:704px;height:40px;background:#ffe0ff"></div>
<div style="left:3px;top:442px;width:2px;height:36px;background:#e8e8e8"></div>
<div style="left:9px;top:442px;width:2px;height:36px;background:#ececec"></div>
<svg style="position:absolute;left:20px;top:444px" width="32" height="32"><use href="#ficon" width="32" height="32"/></svg>
<div class="t" style="left:64.00px;top:438.75px;font-family:'Liberation Sans';font-size:26px;font-weight:bold;color:#000;transform:scaleX(1.0543);transform-origin:0 0;">_strcpy</div>
<div style="left:10px;top:480px;width:704px;height:40px;background:#ffffff"></div>
<div style="left:3px;top:482px;width:2px;height:36px;background:#e8e8e8"></div>
<div style="left:9px;top:482px;width:2px;height:36px;background:#ececec"></div>
<svg style="position:absolute;left:20px;top:484px" width="32" height="32"><use href="#ficon" width="32" height="32"/></svg>
<div class="t" style="left:64.00px;top:478.75px;font-family:'Liberation Sans';font-size:26px;font-weight:normal;color:#000;transform:scaleX(1.0290);transform-origin:0 0;">_screw_aes</div>
<div style="left:10px;top:520px;width:704px;height:40px;background:#ffe0ff"></div>
<div style="left:3px;top:522px;width:2px;height:36px;background:#e8e8e8"></div>
<div style="left:9px;top:522px;width:2px;height:36px;background:#ececec"></div>
<svg style="position:absolute;left:20px;top:524px" width="32" height="32"><use href="#ficon" width="32" height="32"/></svg>
<div class="t" style="left:64.00px;top:518.75px;font-family:'Liberation Sans';font-size:26px;font-weight:bold;color:#000;transform:scaleX(1.0844);transform-origin:0 0;">_fread</div>
<div style="left:10px;top:560px;width:704px;height:40px;background:#ffe0ff"></div>
<div style="left:3px;top:562px;width:2px;height:36px;background:#e8e8e8"></div>
<div style="left:9px;top:562px;width:2px;height:36px;background:#ececec"></div>
<svg style="position:absolute;left:20px;top:564px" width="32" height="32"><use href="#ficon" width="32" height="32"/></svg>
<div class="t" style="left:64.00px;top:558.75px;font-family:'Liberation Sans';font-size:26px;font-weight:bold;color:#000;transform:scaleX(1.0526);transform-origin:0 0;">_readlink</div>
<div style="left:10px;top:600px;width:704px;height:40px;background:#ffffff"></div>
<div style="left:3px;top:602px;width:2px;height:36px;background:#e8e8e8"></div>
<div style="left:9px;top:602px;width:2px;height:36px;background:#ececec"></div>
<svg style="position:absolute;left:20px;top:604px" width="32" height="32"><use href="#ficon" width="32" height="32"/></svg>
<div class="t" style="left:64.00px;top:598.75px;font-family:'Liberation Sans';font-size:26px;font-weight:normal;color:#000;transform:scaleX(1.0282);transform-origin:0 0;">_MD5Final</div>
<div style="left:10px;top:640px;width:704px;height:40px;background:#ffe0ff"></div>
<div style="left:3px;top:642px;width:2px;height:36px;background:#e8e8e8"></div>
<div style="left:9px;top:642px;width:2px;height:36px;background:#ececec"></div>
<svg style="position:absolute;left:20px;top:644px" width="32" height="32"><use href="#ficon" width="32" height="32"/></svg>
<div class="t" style="left:64.00px;top:638.75px;font-family:'Liberation Sans';font-size:26px;font-weight:bold;color:#000;transform:scaleX(1.0449);transform-origin:0 0;">_fclose</div>
<div style="left:10px;top:680px;width:704px;height:40px;background:#ffe0ff"></div>
<div style="left:3px;top:682px;width:2px;height:36px;background:#e8e8e8"></div>
<div style="left:9px;top:682px;width:2px;height:36px;background:#ececec"></div>
<svg style="position:absolute;left:20px;top:684px" width="32" height="32"><use href="#ficon" width="32" height="32"/></svg>
<div class="t" style="left:64.00px;top:678.75px;font-family:'Liberation Sans';font-size:26px;font-weight:bold;color:#000;transform:scaleX(1.0567);transform-origin:0 0;">_rewind</div>
<div style="left:10px;top:720px;width:704px;height:40px;background:#ffffff"></div>
<div style="left:3px;top:722px;width:2px;height:36px;background:#e8e8e8"></div>
<div style="left:9px;top:722px;width:2px;height:36px;background:#ececec"></div>
<svg style="position:absolute;left:20px;top:724px" width="32" height="32"><use href="#ficon" width="32" height="32"/></svg>
<div class="t" style="left:64.00px;top:718.75px;font-family:'Liberation Sans';font-size:26px;font-weight:normal;color:#000;transform:scaleX(1.0519);transform-origin:0 0;">_aes_crypt_ecb</div>
<div style="left:10px;top:760px;width:704px;height:40px;background:#ffffff"></div>
<div style="left:3px;top:762px;width:2px;height:36px;background:#e8e8e8"></div>
<div style="left:9px;top:762px;width:2px;height:36px;background:#ececec"></div>
<svg style="position:absolute;left:20px;top:764px" width="32" height="32"><use href="#ficon" width="32" height="32"/></svg>
<div class="t" style="left:64.00px;top:758.75px;font-family:'Liberation Sans';font-size:26px;font-weight:normal;color:#000;transform:scaleX(1.0500);transform-origin:0 0;">_get_mac_addr</div>
<div style="left:10px;top:800px;width:704px;height:40px;background:#ffe0ff"></div>
<div style="left:3px;top:802px;width:2px;height:36px;background:#e8e8e8"></div>
<div style="left:9px;top:802px;width:2px;height:36px;background:#ececec"></div>
<svg style="position:absolute;left:20px;top:804px" width="32" height="32"><use href="#ficon" width="32" height="32"/></svg>
<div class="t" style="left:64.00px;top:798.75px;font-family:'Liberation Sans';font-size:26px;font-weight:bold;color:#000;transform:scaleX(1.0833);transform-origin:0 0;">_ioctl</div>
<div style="left:10px;top:840px;width:704px;height:40px;background:#ffe0ff"></div>
<div style="left:3px;top:842px;width:2px;height:36px;background:#e8e8e8"></div>
<div style="left:9px;top:842px;width:2px;height:36px;background:#ececec"></div>
<svg style="position:absolute;left:20px;top:844px" width="32" height="32"><use href="#ficon" width="32" height="32"/></svg>
<div class="t" style="left:64.00px;top:838.75px;font-family:'Liberation Sans';font-size:26px;font-weight:bold;color:#000;transform:scaleX(1.0375);transform-origin:0 0;">_close</div>
<div style="left:10px;top:880px;width:704px;height:40px;background:#ffe0ff"></div>
<div style="left:3px;top:882px;width:2px;height:36px;background:#e8e8e8"></div>
<div style="left:9px;top:882px;width:2px;height:36px;background:#ececec"></div>
<svg style="position:absolute;left:20px;top:884px" width="32" height="32"><use href="#ficon" width="32" height="32"/></svg>
<div class="t" style="left:64.00px;top:878.75px;font-family:'Liberation Sans';font-size:26px;font-weight:normal;color:#000;transform:scaleX(1.0504);transform-origin:0 0;">_zend_is_executing</div>
<div style="left:10px;top:920px;width:704px;height:40px;background:#ffe0ff"></div>
<div style="left:3px;top:922px;width:2px;height:36px;background:#e8e8e8"></div>
<div style="left:9px;top:922px;width:2px;height:36px;background:#ececec"></div>
<svg style="position:absolute;left:20px;top:924px" width="32" height="32"><use href="#ficon" width="32" height="32"/></svg>
<div class="t" style="left:64.00px;top:918.75px;font-family:'Liberation Sans';font-size:26px;font-weight:bold;color:#000;transform:scaleX(1.0508);transform-origin:0 0;">_memcmp</div>
<div style="left:10px;top:960px;width:704px;height:40px;background:#ffe0ff"></div>
<div style="left:3px;top:962px;width:2px;height:36px;background:#e8e8e8"></div>
<div style="left:9px;top:962px;width:2px;height:36px;background:#ececec"></div>
<svg style="position:absolute;left:20px;top:964px" width="32" height="32"><use href="#ficon" width="32" height="32"/></svg>
<div class="t" style="left:64.00px;top:958.75px;font-family:'Liberation Sans';font-size:26px;font-weight:normal;color:#000;transform:scaleX(1.0565);transform-origin:0 0;">___tls_get_addr</div>
<div style="left:10px;top:1000px;width:704px;height:40px;background:#ffe0ff"></div>
<div style="left:3px;top:1002px;width:2px;height:36px;background:#e8e8e8"></div>
<div style="left:9px;top:1002px;width:2px;height:36px;background:#ececec"></div>
<svg style="position:absolute;left:20px;top:1004px" width="32" height="32"><use href="#ficon" width="32" height="32"/></svg>
<div class="t" style="left:64.00px;top:998.75px;font-family:'Liberation Sans';font-size:26px;font-weight:bold;color:#000;transform:scaleX(1.0460);transform-origin:0 0;">_calloc</div>
<div style="left:10px;top:1040px;width:704px;height:40px;background:#ffe0ff"></div>
<div style="left:3px;top:1042px;width:2px;height:36px;background:#e8e8e8"></div>
<div style="left:9px;top:1042px;width:2px;height:36px;background:#ececec"></div>
<svg style="position:absolute;left:20px;top:1044px" width="32" height="32"><use href="#ficon" width="32" height="32"/></svg>
<div class="t" style="left:64.00px;top:1038.75px;font-family:'Liberation Sans';font-size:26px;font-weight:bold;color:#000;transform:scaleX(1.1092);transform-origin:0 0;">___fxstat64</div>
<div style="left:10px;top:1080px;width:704px;height:40px;background:#ffe0ff"></div>
<div style="left:3px;top:1082px;width:2px;height:36px;background:#e8e8e8"></div>
<div style="left:9px;top:1082px;width:2px;height:36px;background:#ececec"></div>
<svg style="position:absolute;left:20px;top:1084px" width="32" height="32"><use href="#ficon" width="32" height="32"/></svg>
<div class="t" style="left:64.00px;top:1078.75px;font-family:'Liberation Sans';font-size:26px;font-weight:bold;color:#000;transform:scaleX(1.0833);transform-origin:0 0;">_fopen64</div>
<div style="left:10px;top:1120px;width:704px;height:40px;background:#ffe0ff"></div>
<div style="left:3px;top:1122px;width:2px;height:36px;background:#e8e8e8"></div>
<div style="left:9px;top:1122px;width:2px;height:36px;background:#ececec"></div>
<svg style="position:absolute;left:20px;top:1124px" width="32" height="32"><use href="#ficon" width="32" height="32"/></svg>
<div class="t" style="left:64.00px;top:1118.75px;font-family:'Liberation Sans';font-size:26px;font-weight:normal;color:#000;transform:scaleX(1.0572);transform-origin:0 0;">_php_info_print_table_end</div>
</div>
<div style="left:0px;top:1508px;width:715px;height:1px;background:#c8c8c8"></div>
<div style="left:0px;top:1509.5px;width:715px;height:1.5px;background:#747474"></div>
<div style="left:0px;top:1511px;width:716px;height:41px;background:linear-gradient(#e8e8e8,#d4d4d4 45%,#adadad)"></div>
<div class="t" style="left:11.13px;top:1512.00px;font-family:'Liberation Sans';font-size:26px;font-weight:normal;color:#000;transform:scaleX(1.0372);transform-origin:0 0;">Line 2 of 105</div>
<div style="left:350px;top:1553px;width:14px;height:3px;background:#d4d4d4;border-radius:2px"></div>
<div style="left:0px;top:1558px;width:715px;height:44px;background:#ececec;border:1px solid #c2c2c2;border-bottom:2px solid #b0b0b0;box-sizing:border-box"></div>
<svg style="position:absolute;left:11px;top:1566px" width="32" height="32"><use href="#graphi" width="32" height="32"/></svg>
<div class="t" style="left:51.87px;top:1563.00px;font-family:'Liberation Sans';font-size:26px;font-weight:normal;color:#000;transform:scaleX(1.0320);transform-origin:0 0;">Graph overview</div>
<svg style="position:absolute;left:596px;top:1567px" width="18" height="18"><use href="#pfloat" width="18" height="18"/></svg>
<svg style="position:absolute;left:630px;top:1569px" width="28" height="28"><use href="#prestore" width="28" height="28"/></svg>
<svg style="position:absolute;left:674px;top:1569px" width="28" height="28"><use href="#pclose" width="28" height="28"/></svg>
<div style="left:0px;top:1608px;width:715px;height:222px;background:linear-gradient(#ffffff,#e0f5fd)"></div>
<svg style="position:absolute;left:0;top:1608px" width="715" height="222"><defs><filter id="shb" x="-30%" y="-30%" width="160%" height="160%"><feGaussianBlur stdDeviation="1.6"/></filter></defs><rect x="336" y="10" width="53" height="91" fill="#222" opacity="0.55" filter="url(#shb)"/><rect x="331" y="1" width="54" height="96" fill="#fff" stroke="#000" stroke-width="2"/><rect x="334" y="110" width="56" height="74" fill="#222" opacity="0.55" filter="url(#shb)"/><rect x="329" y="101" width="58" height="78" fill="#fff" stroke="#000" stroke-width="2"/><path d="M385 102 V178" stroke="#50a050" stroke-width="1.2"/><path d="M340 99 H386" stroke="#707070" stroke-width="2"/><path d="M357 99 H388" stroke="#3a8a3a" stroke-width="2"/><rect x="353" y="98" width="4" height="2" fill="#e00"/><path d="M340 181.5 H386" stroke="#707070" stroke-width="2"/><path d="M358 181.5 H388" stroke="#3a8a3a" stroke-width="2"/><rect x="354" y="180.5" width="4" height="2.5" fill="#00e"/><rect x="341" y="190" width="41" height="33" fill="#222" opacity="0.5" filter="url(#shb)"/><rect x="337" y="185" width="42" height="35" fill="#fff" stroke="#000" stroke-width="2"/><path d="M166 -10 V164.5 H588 V-10" fill="none" stroke="#000" stroke-width="1.6" stroke-dasharray="1.6 3.4"/></svg>
<div style="left:716px;top:1040px;width:4px;height:20px;background:#d0d0d0;border-radius:2px"></div>
<div style="left:722px;top:292px;width:36px;height:22px;background:#e6e6e6;border-radius:9px 0 0 0"></div>
<div style="left:3558px;top:292px;width:25px;height:22px;background:#e4e4e4;border-radius:0 9px 0 0"></div>
<div style="left:752px;top:272px;width:2801.5px;height:41.5px;background:#e1e1e1;border-radius:10px"></div>
<div style="left:1005.5px;top:273px;width:298.5px;height:40.5px;background:#fff;border-radius:10px"></div>
<svg style="position:absolute;left:772px;top:282px" width="24" height="24"><use href="#closec" width="24" height="24"/></svg>
<svg style="position:absolute;left:804px;top:276px" width="32" height="32"><use href="#doc" width="32" height="32"/></svg>
<div class="t" style="left:842.91px;top:273.50px;font-family:'Liberation Sans';font-size:26px;font-weight:normal;color:#000;transform:scaleX(1.0465);transform-origin:0 0;">IDA View-A</div>
<svg style="position:absolute;left:1030px;top:282px" width="24" height="24"><use href="#closec" width="24" height="24"/></svg>
<svg style="position:absolute;left:1062px;top:276px" width="32" height="32"><use href="#doc" width="32" height="32"/></svg>
<svg style="position:absolute;left:1331.75px;top:282px" width="24" height="24"><use href="#closec" width="24" height="24"/></svg>
<svg style="position:absolute;left:1363.75px;top:276px" width="32" height="32"><use href="#doc" width="32" height="32"/></svg>
<div class="t" style="left:1402.89px;top:273.50px;font-family:'Liberation Sans';font-size:26px;font-weight:normal;color:#000;transform:scaleX(1.0547);transform-origin:0 0;">IDA View-B</div>
<div style="left:1563.5px;top:282px;width:2px;height:23px;background:#c8c8c8"></div>
<svg style="position:absolute;left:1589.75px;top:282px" width="24" height="24"><use href="#closec" width="24" height="24"/></svg>
<svg style="position:absolute;left:1621.75px;top:276px" width="32" height="32"><use href="#doc" width="32" height="32"/></svg>
<div class="t" style="left:1660.40px;top:273.50px;font-family:'Liberation Sans';font-size:26px;font-weight:normal;color:#000;transform:scaleX(1.0481);transform-origin:0 0;">IDA View-C</div>
<div style="left:1821.5px;top:282px;width:2px;height:23px;background:#c8c8c8"></div>
<svg style="position:absolute;left:1847.5px;top:282px" width="24" height="24"><use href="#closec" width="24" height="24"/></svg>
<svg style="position:absolute;left:1879.5px;top:276px" width="32" height="32"><use href="#doc" width="32" height="32"/></svg>
<div class="t" style="left:1918.87px;top:273.50px;font-family:'Liberation Sans';font-size:26px;font-weight:normal;color:#000;transform:scaleX(1.0644);transform-origin:0 0;">Pseudocode-B</div>
<div style="left:2121.5px;top:282px;width:2px;height:23px;background:#c8c8c8"></div>
<svg style="position:absolute;left:2148px;top:282px" width="24" height="24"><use href="#closec" width="24" height="24"/></svg>
<svg style="position:absolute;left:2180px;top:276px" width="32" height="32"><use href="#doc" width="32" height="32"/></svg>
<div class="t" style="left:2218.90px;top:273.50px;font-family:'Liberation Sans';font-size:26px;font-weight:normal;color:#000;transform:scaleX(1.0518);transform-origin:0 0;">Pseudocode-A</div>
<div style="left:2421.5px;top:282px;width:2px;height:23px;background:#c8c8c8"></div>
<svg style="position:absolute;left:2447.5px;top:282px" width="24" height="24"><use href="#closec" width="24" height="24"/></svg>
<svg style="position:absolute;left:2479.5px;top:276px" width="32" height="32"><use href="#hexi" width="32" height="32"/></svg>
<div class="t" style="left:2518.92px;top:273.50px;font-family:'Liberation Sans';font-size:26px;font-weight:normal;color:#000;transform:scaleX(1.0388);transform-origin:0 0;">Hex View-1</div>
<div style="left:2677.75px;top:282px;width:2px;height:23px;background:#c8c8c8"></div>
<svg style="position:absolute;left:2703.75px;top:282px" width="24" height="24"><use href="#closec" width="24" height="24"/></svg>
<svg style="position:absolute;left:2735.75px;top:276px" width="32" height="32"><use href="#structi" width="32" height="32"/></svg>
<div class="t" style="left:2776.44px;top:273.50px;font-family:'Liberation Sans';font-size:26px;font-weight:normal;color:#000;transform:scaleX(1.0641);transform-origin:0 0;">Structures</div>
<div style="left:2926px;top:282px;width:2px;height:23px;background:#c8c8c8"></div>
<svg style="position:absolute;left:2951.75px;top:282px" width="24" height="24"><use href="#closec" width="24" height="24"/></svg>
<svg style="position:absolute;left:2983.75px;top:276px" width="32" height="32"><use href="#enumi" width="32" height="32"/></svg>
<div class="t" style="left:3022.96px;top:273.50px;font-family:'Liberation Sans';font-size:26px;font-weight:normal;color:#000;transform:scaleX(1.0192);transform-origin:0 0;">Enums</div>
<div style="left:3127.75px;top:282px;width:2px;height:23px;background:#c8c8c8"></div>
<svg style="position:absolute;left:3153.8px;top:282px" width="24" height="24"><use href="#closec" width="24" height="24"/></svg>
<svg style="position:absolute;left:3185.8px;top:276px" width="32" height="32"><use href="#impi" width="32" height="32"/></svg>
<div class="t" style="left:3225.22px;top:273.50px;font-family:'Liberation Sans';font-size:26px;font-weight:normal;color:#000;transform:scaleX(1.0881);transform-origin:0 0;">Imports</div>
<div style="left:3342px;top:282px;width:2px;height:23px;background:#c8c8c8"></div>
<svg style="position:absolute;left:3368px;top:282px" width="24" height="24"><use href="#closec" width="24" height="24"/></svg>
<svg style="position:absolute;left:3400px;top:276px" width="32" height="32"><use href="#expi" width="32" height="32"/></svg>
<div class="t" style="left:3439.26px;top:273.50px;font-family:'Liberation Sans';font-size:26px;font-weight:normal;color:#000;transform:scaleX(1.0706);transform-origin:0 0;">Exports</div>
<div style="left:722px;top:314px;width:2861px;height:1515px;background:#fff"></div>
<div style="left:780px;top:314px;width:2803px;height:1px;background:#9c9c9c"></div>
<div style="left:780px;top:314px;width:1px;height:1471px;background:#a8a8a8"></div>
<div style="left:3582px;top:314px;width:1px;height:1471px;background:#a8a8a8"></div>
<div style="left:722px;top:314px;width:1px;height:1515px;background:#e6e6e6"></div>
<div style="left:782px;top:316px;width:84px;height:20px;background:#ffff00"></div>
<div style="left:1166px;top:316px;width:84px;height:20px;background:#ffff00"></div>
<div class="c" style="left:782px;top:316px"><span style="color:#808080">__int64</span><span style="color:#808080"> __fastcall get_mac_addr(</span><span style="color:#808080">__int64</span><span style="color:#808080"> a1)</span></div>
<div class="c" style="left:700px;top:316px;width:76px;text-align:right;color:#808080">1</div>
<div class="c" style="left:782px;top:336px"><span style="color:#000080">{</span></div>
<div class="c" style="left:700px;top:336px;width:76px;text-align:right;color:#808080">2</div>
<div style="left:806px;top:356px;width:84px;height:20px;background:#ffff00"></div>
<div class="c" style="left:782px;top:356px"><span style="color:#000080">  </span><span style="color:#808080">__int64</span><span style="color:#808080"> v1</span><span style="color:#000080">; </span><span style="color:#0000ff">// </span><span style="color:#8080ff">rbx</span></div>
<div class="c" style="left:700px;top:356px;width:76px;text-align:right;color:#808080">3</div>
<div class="c" style="left:782px;top:376px"><span style="color:#000080">  int v2; </span><span style="color:#0000ff">// </span><span style="color:#8080ff">eax</span></div>
<div class="c" style="left:700px;top:376px;width:76px;text-align:right;color:#808080">4</div>
<div class="c" style="left:782px;top:396px"><span style="color:#000080">  const char *v3; </span><span style="color:#0000ff">// </span><span style="color:#8080ff">rdi</span></div>
<div class="c" style="left:700px;top:396px;width:76px;text-align:right;color:#808080">5</div>
<div class="c" style="left:782px;top:416px"><span style="color:#000080">  int v4; </span><span style="color:#0000ff">// </span><span style="color:#8080ff">ebp</span></div>
<div class="c" style="left:700px;top:416px;width:76px;text-align:right;color:#808080">6</div>
<div class="c" style="left:782px;top:436px"><span style="color:#000080">  char *v5; </span><span style="color:#0000ff">// </span><span style="color:#8080ff">rax</span></div>
<div class="c" style="left:700px;top:436px;width:76px;text-align:right;color:#808080">7</div>
<div style="left:806px;top:456px;width:84px;height:20px;background:#ffff00"></div>
<div class="c" style="left:782px;top:456px"><span style="color:#000080">  </span><span style="color:#808080">__int64</span><span style="color:#808080"> v7</span><span style="color:#000080">; </span><span style="color:#0000ff">// </span><span style="color:#8080ff">[rsp+0h] [rbp-48h]</span></div>
<div class="c" style="left:700px;top:456px;width:76px;text-align:right;color:#808080">8</div>
<div class="c" style="left:782px;top:476px"><span style="color:#000080">  unsigned __int8 v8; </span><span style="color:#0000ff">// </span><span style="color:#8080ff">[rsp+15h] [rbp-33h]</span></div>
<div class="c" style="left:700px;top:476px;width:76px;text-align:right;color:#808080">9</div>
<div class="c" style="left:782px;top:496px"><span style="color:#000080">  unsigned __int8 v9; </span><span style="color:#0000ff">// </span><span style="color:#8080ff">[rsp+16h] [rbp-32h]</span></div>
<div class="c" style="left:700px;top:496px;width:76px;text-align:right;color:#808080">10</div>
<div class="c" style="left:782px;top:516px"><span style="color:#000080">  unsigned __int8 v10; </span><span style="color:#0000ff">// </span><span style="color:#8080ff">[rsp+17h] [rbp-31h]</span></div>
<div class="c" style="left:700px;top:516px;width:76px;text-align:right;color:#808080">11</div>
<div class="c" style="left:782px;top:536px"></div>
<div class="c" style="left:700px;top:536px;width:76px;text-align:right;color:#808080">12</div>
<div class="c" style="left:782px;top:556px"><span style="color:#000080">  </span><span style="color:#8080ff">v1</span><span style="color:#000080"> = </span><span style="color:#8080ff">a1</span><span style="color:#000080">;</span></div>
<div class="c" style="left:700px;top:556px;width:76px;text-align:right;color:#808080">13</div>
<div style="left:729.3px;top:560.3px;width:11.4px;height:11.4px;border-radius:50%;background:#55c8fa"></div>
<div class="c" style="left:782px;top:576px"><span style="color:#000080">  </span><span style="color:#8080ff">v2</span><span style="color:#000080"> = </span><span style="color:#0000ff">socket</span><span style="color:#000080">(2, 1, 0);</span></div>
<div class="c" style="left:700px;top:576px;width:76px;text-align:right;color:#808080">14</div>
<div style="left:729.3px;top:580.3px;width:11.4px;height:11.4px;border-radius:50%;background:#55c8fa"></div>
<div class="c" style="left:782px;top:596px"><span style="color:#000080">  </span><span style="color:#8080ff">v3</span><span style="color:#000080"> = </span><span style="color:#008000">&quot;socket&quot;</span><span style="color:#000080">;</span></div>
<div class="c" style="left:700px;top:596px;width:76px;text-align:right;color:#808080">15</div>
<div style="left:729.3px;top:600.3px;width:11.4px;height:11.4px;border-radius:50%;background:#55c8fa"></div>
<div class="c" style="left:782px;top:616px"><span style="color:#000080">  if ( </span><span style="color:#8080ff">v2</span><span style="color:#000080"> &gt;= 0 )</span></div>
<div class="c" style="left:700px;top:616px;width:76px;text-align:right;color:#808080">16</div>
<div style="left:729.3px;top:620.3px;width:11.4px;height:11.4px;border-radius:50%;background:#55c8fa"></div>
<div class="c" style="left:782px;top:636px"><span style="color:#000080">  {</span></div>
<div class="c" style="left:700px;top:636px;width:76px;text-align:right;color:#808080">17</div>
<div class="c" style="left:782px;top:656px"><span style="color:#000080">    </span><span style="color:#8080ff">v4</span><span style="color:#000080"> = </span><span style="color:#8080ff">v2</span><span style="color:#000080">;</span></div>
<div class="c" style="left:700px;top:656px;width:76px;text-align:right;color:#808080">18</div>
<div style="left:729.3px;top:660.3px;width:11.4px;height:11.4px;border-radius:50%;background:#55c8fa"></div>
<div class="c" style="left:782px;top:676px"><span style="color:#000080">    </span><span style="color:#8080ff">v5</span><span style="color:#000080"> = </span><span style="color:#0000ff">strcpy</span><span style="color:#000080">((</span><span style="color:#808080">char *</span><span style="color:#000080">)&amp;</span><span style="color:#8080ff">v7</span><span style="color:#000080">, </span><span style="color:#008000">&quot;eth0&quot;</span><span style="color:#000080">);</span></div>
<div class="c" style="left:700px;top:676px;width:76px;text-align:right;color:#808080">19</div>
<div style="left:729.3px;top:680.3px;width:11.4px;height:11.4px;border-radius:50%;background:#55c8fa"></div>
<div class="c" style="left:782px;top:696px"><span style="color:#000080">    if ( </span><span style="color:#0000ff">ioctl</span><span style="color:#000080">(</span><span style="color:#8080ff">v4</span><span style="color:#000080">, 0x8927uLL, </span><span style="color:#8080ff">v5</span><span style="color:#000080">) &gt;= 0 )</span></div>
<div class="c" style="left:700px;top:696px;width:76px;text-align:right;color:#808080">20</div>
<div style="left:729.3px;top:700.3px;width:11.4px;height:11.4px;border-radius:50%;background:#55c8fa"></div>
<div class="c" style="left:782px;top:716px"><span style="color:#000080">    {</span></div>
<div class="c" style="left:700px;top:716px;width:76px;text-align:right;color:#808080">21</div>
<div class="c" style="left:782px;top:736px"><span style="color:#000080">      </span><span style="color:#0000ff">php_sprintf</span><span style="color:#000080">(</span><span style="color:#8080ff">v1</span><span style="color:#000080">, &amp;</span><span style="color:#0000ff">unk_38FA</span><span style="color:#000080">, </span><span style="color:#8080ff">v8</span><span style="color:#000080">, </span><span style="color:#8080ff">v9</span><span style="color:#000080">, </span><span style="color:#8080ff">v10</span><span style="color:#000080">);</span></div>
<div class="c" style="left:700px;top:736px;width:76px;text-align:right;color:#808080">22</div>
<div style="left:729.3px;top:740.3px;width:11.4px;height:11.4px;border-radius:50%;background:#55c8fa"></div>
<div class="c" style="left:782px;top:756px"><span style="color:#000080">      return </span><span style="color:#8080ff">v1</span><span style="color:#000080">;</span></div>
<div class="c" style="left:700px;top:756px;width:76px;text-align:right;color:#808080">23</div>
<div style="left:729.3px;top:760.3px;width:11.4px;height:11.4px;border-radius:50%;background:#55c8fa"></div>
<div class="c" style="left:782px;top:776px"><span style="color:#000080">    }</span></div>
<div class="c" style="left:700px;top:776px;width:76px;text-align:right;color:#808080">24</div>
<div class="c" style="left:782px;top:796px"><span style="color:#000080">    </span><span style="color:#8080ff">v3</span><span style="color:#000080"> = </span><span style="color:#008000">&quot;ioctl&quot;</span><span style="color:#000080">;</span></div>
<div class="c" style="left:700px;top:796px;width:76px;text-align:right;color:#808080">25</div>
<div style="left:729.3px;top:800.3px;width:11.4px;height:11.4px;border-radius:50%;background:#55c8fa"></div>
<div class="c" style="left:782px;top:816px"><span style="color:#000080">  }</span></div>
<div class="c" style="left:700px;top:816px;width:76px;text-align:right;color:#808080">26</div>
<div class="c" style="left:782px;top:836px"><span style="color:#000080">  </span><span style="color:#0000ff">perror</span><span style="color:#000080">(</span><span style="color:#8080ff">v3</span><span style="color:#000080">);</span></div>
<div class="c" style="left:700px;top:836px;width:76px;text-align:right;color:#808080">27</div>
<div style="left:729.3px;top:840.3px;width:11.4px;height:11.4px;border-radius:50%;background:#55c8fa"></div>
<div class="c" style="left:782px;top:856px"><span style="color:#000080">  return 0LL;</span></div>
<div class="c" style="left:700px;top:856px;width:76px;text-align:right;color:#808080">28</div>
<div style="left:729.3px;top:860.3px;width:11.4px;height:11.4px;border-radius:50%;background:#55c8fa"></div>
<div class="c" style="left:782px;top:876px"><span style="color:#000080">}</span></div>
<div class="c" style="left:700px;top:876px;width:76px;text-align:right;color:#808080">29</div>
<div style="left:729.3px;top:880.3px;width:11.4px;height:11.4px;border-radius:50%;background:#55c8fa"></div>
<div style="left:780px;top:1784px;width:2802px;height:1px;background:#7a7a7a"></div>
<div style="left:780px;top:1785px;width:2802px;height:42px;background:linear-gradient(#e8e8e8,#d0d0d0 50%,#adadad)"></div>
<div style="left:780px;top:1827px;width:2802px;height:2px;background:#c4c4c4"></div>
<div class="t" style="left:784.26px;top:1786.60px;font-family:'Liberation Sans';font-size:26px;font-weight:normal;color:#000;transform:scaleX(1.0369);transform-origin:0 0;">000036EF  get_mac_addr:1 (36EF)</div>
<div style="left:0px;top:1829px;width:3584px;height:223px;background:#ececec"></div>
<div style="left:0px;top:1828px;width:3584px;height:1px;background:#d8d8d8"></div>
<div style="left:1786px;top:1830px;width:12px;height:5px;background:#d6d6d6;border-radius:2px"></div>
<div style="left:0px;top:1836px;width:3582px;height:44px;background:#ececec;border-top:1px solid #b8b8b8;border-bottom:2px solid #b0b0b0;border-right:2px solid #b8b8b8;box-sizing:border-box"></div>
<svg style="position:absolute;left:12px;top:1844px" width="28" height="32"><use href="#outi" width="28" height="32"/></svg>
<div class="t" style="left:51.94px;top:1840.70px;font-family:'Liberation Sans';font-size:26px;font-weight:normal;color:#000;transform:scaleX(1.0643);transform-origin:0 0;">Output window</div>
<svg style="position:absolute;left:3464px;top:1844px" width="18" height="18"><use href="#pfloat" width="18" height="18"/></svg>
<svg style="position:absolute;left:3498px;top:1846px" width="28" height="28"><use href="#prestore" width="28" height="28"/></svg>
<svg style="position:absolute;left:3542px;top:1846px" width="28" height="28"><use href="#pclose" width="28" height="28"/></svg>
<div style="left:0;top:1886px;width:3582px;height:44px;background:#fff;border-top:1px solid #a8a8a8;border-bottom:2px solid #b4b4b4;border-right:1px solid #c0c0c0;box-sizing:border-box;overflow:hidden">
<div class="c" style="left:10.5px;top:-17px;color:#000">18F0: using guessed type __int64 __fastcall php_sprintf(_QWORD, _QWORD, _QWORD, _QWORD, _QWORD);</div>
<div class="c" style="left:10.5px;top:3px;color:#000">18F0: using guessed type __int64 __fastcall php_sprintf(_QWORD, _QWORD, _QWORD, _QWORD, _QWORD);</div>
<div class="c" style="left:10.5px;top:23px;color:#000">18F0: using guessed type __int64 __fastcall php_sprintf(_QWORD, _QWORD, _QWORD, _QWORD, _QWORD);</div>
</div>
<div style="left:135.5px;top:1941px;width:3445px;height:51px;background:#fdfdfd;border-top:1px solid #dcdcdc;border-bottom:2px solid #bdbdbd;box-sizing:border-box"></div>
<div style="left:12px;top:1956px;width:116px;height:32px;background:#fff;border-radius:7px;box-shadow:0 0.5px 1.5px rgba(0,0,0,.4)"></div>
<div class="t" style="left:26.57px;top:1952.00px;font-family:'Liberation Sans';font-size:26px;font-weight:normal;color:#000;transform:scaleX(1.0662);transform-origin:0 0;">Python</div>
<div style="left:0px;top:2010px;width:3584px;height:1px;background:#6a6a6a"></div>
<div style="left:0px;top:2011px;width:3584px;height:41px;background:linear-gradient(#e4e4e4,#cfcfcf 45%,#a9a9a9);border-radius:0 0 20px 20px"></div>
<div class="t" style="left:5.00px;top:2012.80px;font-family:'Liberation Sans';font-size:26px;font-weight:normal;color:#000;transform:scaleX(1.0206);transform-origin:0 0;">AU:  idle</div>
<div class="t" style="left:154.37px;top:2012.80px;font-family:'Liberation Sans';font-size:26px;font-weight:normal;color:#000;transform:scaleX(1.0635);transform-origin:0 0;">Down</div>
<div class="t" style="left:306.43px;top:2012.80px;font-family:'Liberation Sans';font-size:26px;font-weight:normal;color:#000;transform:scaleX(1.0350);transform-origin:0 0;">Disk: 570GB</div>
</div></body></html>
